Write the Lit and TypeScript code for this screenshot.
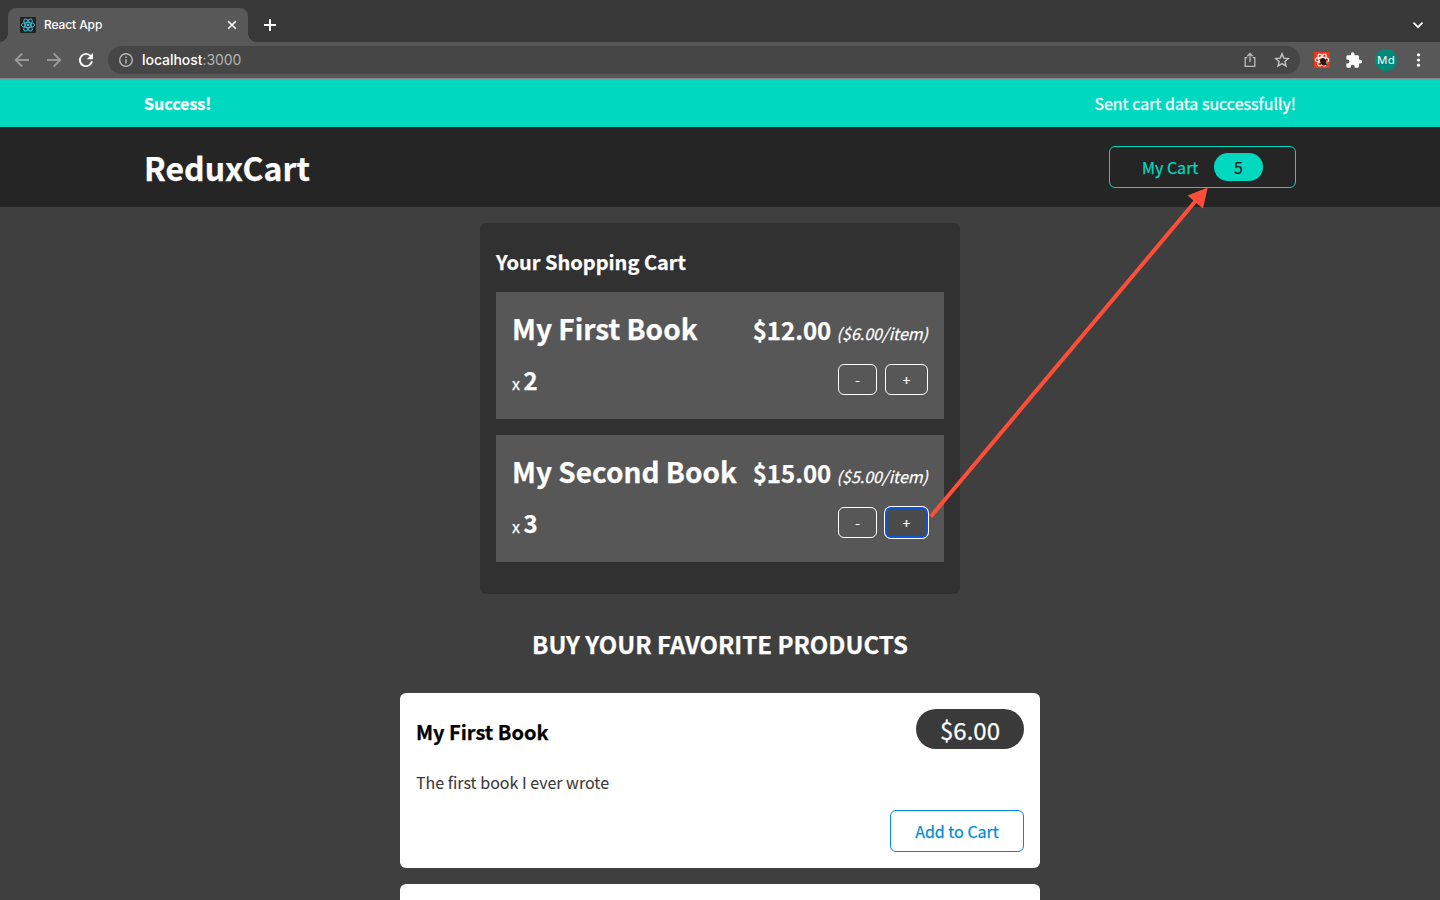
import { LitElement, html, css, svg } from "lit";
import { customElement, property } from "lit/decorators.js";

const reactMark = (stroke: string, w: number) => svg`
  <g fill="none" stroke=${stroke} stroke-width=${w}>
    <ellipse cx="8" cy="8" rx="6.7" ry="2.6"></ellipse>
    <ellipse cx="8" cy="8" rx="6.7" ry="2.6" transform="rotate(60 8 8)"></ellipse>
    <ellipse cx="8" cy="8" rx="6.7" ry="2.6" transform="rotate(120 8 8)"></ellipse>
  </g>
  <circle cx="8" cy="8" r="1.3" fill=${stroke}></circle>`;

@customElement("browser-chrome")
class BrowserChrome extends LitElement {
  static styles = css`
    :host { display: block; font-family: Inter, sans-serif; color: #fff; -webkit-text-stroke: 0; }
    svg { display: block; flex: none; }
    .strip { display: flex; height: 42px; box-sizing: border-box; padding: 8px 14px 0 8px; background: #383838; }
    .tab { position: relative; display: flex; align-items: center; box-sizing: border-box; width: 240px; height: 34px; padding: 0 10px 0 12px; background: #585858; border-radius: 8px 8px 0 0; }
    .tab::before, .tab::after { content: ""; position: absolute; bottom: 0; width: 8px; height: 8px; }
    .tab::before { left: -8px; background: radial-gradient(circle at 0 0, transparent 7.5px, #585858 8px); }
    .tab::after { right: -8px; background: radial-gradient(circle at 100% 0, transparent 7.5px, #585858 8px); }
    .name { flex: 1; margin-left: 8px; font-size: 12px; line-height: 16px; font-weight: 500; letter-spacing: -0.1px; }
    .plus { margin: 10px 0 0 15px; }
    .chev { margin: 10px 0 0 auto; }
    .bar { display: flex; align-items: center; height: 36px; padding: 0 14px; background: #585858; border-bottom: 1px solid #858585; }
    .nav { display: flex; gap: 16px; margin-right: 14px; }
    .omni { flex: 1; display: flex; align-items: center; height: 28px; border-radius: 14px; background: #464646; padding: 0 10px; }
    .url { flex: 1; margin-left: 8px; font-size: 14px; line-height: 20px; font-weight: 500; letter-spacing: -0.05px; }
    .port { color: #b4b4b4; font-weight: 400; }
    .star { margin-left: 16px; }
    .exts { display: flex; align-items: center; margin-left: 14px; }
    .puzzle { margin-left: 16px; }
    .me { width: 22px; height: 22px; margin-left: 13px; border-radius: 50%; background: #00897b; font-family: "Noto Sans", sans-serif; font-size: 11.5px; line-height: 22px; text-align: center; font-weight: 400; letter-spacing: 0.2px; }
    .dots { margin-left: 13px; }
  `;
  render() {
    return html`
      <div class="strip">
        <div class="tab">
          <svg width="16" height="16"><rect width="16" height="16" rx="1" fill="#222"></rect>${reactMark("#3fbfdf", 0.9)}</svg>
          <span class="name">React App</span>
          <svg width="12" height="12"><path d="M2.2 2.2l7.6 7.6M9.8 2.2l-7.6 7.6" stroke="#fff" stroke-width="1.6"></path></svg>
        </div>
        <svg class="plus" width="14" height="14"><path d="M7 1v12M1 7h12" stroke="#fff" stroke-width="2"></path></svg>
        <svg class="chev" width="16" height="14"><path d="M3.5 4.7L8 9.2l4.5-4.5" fill="none" stroke="#fff" stroke-width="1.7"></path></svg>
      </div>
      <div class="bar">
        <div class="nav">
          <svg width="16" height="16"><path d="M15 8H2M8.2 1.5L1.7 8l6.5 6.5" fill="none" stroke="#999" stroke-width="1.8"></path></svg>
          <svg width="16" height="16"><path d="M1 8h13M7.8 1.5L14.3 8l-6.5 6.5" fill="none" stroke="#999" stroke-width="1.8"></path></svg>
          <svg width="16" height="16"><path d="M12.8 4.2A6.1 6.1 0 1 0 14 9.3" fill="none" stroke="#fff" stroke-width="1.9"></path><path d="M15 1v6.2H8.8z" fill="#fff"></path></svg>
        </div>
        <div class="omni">
          <svg width="16" height="16"><circle cx="8" cy="8" r="6.3" fill="none" stroke="#b4b8bc" stroke-width="1.4"></circle><path d="M8 7.2v4.3M8 4.5v1.6" stroke="#b4b8bc" stroke-width="1.5"></path></svg>
          <span class="url">localhost<span class="port">:3000</span></span>
          <svg width="16" height="16"><path d="M5.3 5.6H3.2v8.7h9.6V5.6h-2.1M8 10V1.8M5.3 4.2L8 1.5l2.7 2.7" fill="none" stroke="#bdbdbd" stroke-width="1.3"></path></svg>
          <svg class="star" width="16" height="16"><path d="M8 1.9l1.8 4.2 4.6.4-3.5 3 1.1 4.5L8 11.6 4 14l1.1-4.5-3.5-3 4.6-.4z" fill="none" stroke="#c4c4c4" stroke-width="1.4"></path></svg>
        </div>
        <div class="exts">
          <svg width="16" height="16"><rect width="16" height="16" fill="#e8381b"></rect>${reactMark("#fff", 1.1)}<ellipse cx="9.3" cy="9.8" rx="3" ry="3.7" transform="rotate(-20 9.3 9.8)" fill="#2b1512"></ellipse><path d="M5.5 7.500l3 2M6 12l2-1M11 8.500l2-1.500M11 12l2 .8" stroke="#2b1512"></path></svg>
          <svg class="puzzle" width="16" height="16" viewBox="1.5 0.7 21.5 21.5"><path fill="#fff" d="M20.5 11H19V7c0-1.1-.9-2-2-2h-4V3.5a2.5 2.5 0 0 0-5 0V5H4c-1.1 0-2 .9-2 2v3.800h1.500a2.700 2.700 0 0 1 0 5.400H2V20c0 1.100.9 2 2 2h3.800v-1.500a2.700 2.700 0 0 1 5.400 0V22H17c1.100 0 2-.9 2-2v-4h1.500a2.500 2.500 0 0 0 0-5z"></path></svg>
          <span class="me">Md</span>
          <svg class="dots" width="16" height="16" fill="#fff"><circle cx="8.5" cy="2.8" r="1.6"></circle><circle cx="8.5" cy="8" r="1.6"></circle><circle cx="8.5" cy="13.2" r="1.6"></circle></svg>
        </div>
      </div>`;
  }
}

@customElement("cart-item")
class CartItem extends LitElement {
  @property() name = "";
  @property() total = "";
  @property() price = "";
  @property() quantity = "";
  @property({ type: Boolean }) focused = false;
  static styles = css`
    :host { display: block; box-sizing: border-box; height: 127px; padding: 16px; margin-bottom: 16px; background: #575757; color: #fff; }
    .row { display: flex; justify-content: space-between; align-items: baseline; height: 41px; line-height: 41px; }
    .name { font-size: 28px; font-weight: 700; white-space: nowrap; }
    .total { font-size: 24px; font-weight: 700; white-space: nowrap; }
    .each { font-size: 16px; font-weight: 400; font-style: italic; margin-left: 5.3px; }
    .foot { display: flex; justify-content: space-between; margin-top: 15px; height: 35px; }
    .qty { line-height: 31px; font-size: 16px; }
    .count { font-size: 24px; font-weight: 700; margin-left: 3.5px; }
    .acts { display: flex; gap: 8px; }
    .btn { box-sizing: border-box; height: 31px; width: 39px; border: 1px solid #fff; border-radius: 6px; text-align: center; font-size: 13.333px; line-height: 29px; }
    .wide { width: 43px; }
    .focus { background: #4b4b4b; border: 2px solid #0b57d8; box-shadow: 0 0 0 1px #fff; line-height: 27px; }
  `;
  render() {
    return html`
      <div class="row"><span class="name">${this.name}</span><span class="total">${this.total}<span class="each">(${this.price}/item)</span></span></div>
      <div class="foot">
        <div class="qty">x<span class="count">${this.quantity}</span></div>
        <div class="acts"><div class="btn">-</div><div class="btn wide ${this.focused ? "focus" : ""}">+</div></div>
      </div>`;
  }
}

@customElement("app-root")
class AppRoot extends LitElement {
  static styles = css`
    :host { display: block; position: relative; height: 900px; overflow: hidden; background: #3f3f3f; color: #fff; font-family: "Noto Sans CJK JP", sans-serif; font-size: 16px; -webkit-text-stroke: 0.25px; }
    .note { display: flex; justify-content: space-between; height: 48px; line-height: 49px; padding: 0 144px; background: #00d9c0; }
    .strong { font-weight: 700; }
    .head { display: flex; justify-content: space-between; align-items: center; height: 80px; padding: 0 144px; background: #252525; }
    .brand { font-size: 32px; font-weight: 700; line-height: 76px; height: 76px; }
    .mycart { display: flex; align-items: center; box-sizing: border-box; width: 187px; height: 42px; padding-left: 32px; border: 1px solid #00d9c0; border-radius: 6px; color: #00d9c0; }
    .label { width: 56px; line-height: 24px; white-space: nowrap; }
    .badge { width: 49px; height: 28px; margin-left: 16px; border-radius: 14px; background: #00d9c0; color: #252525; text-align: center; line-height: 29px; }
    .cart { box-sizing: border-box; width: 480px; height: 371px; margin: 16px auto 0; padding: 24px 16px 0; border-radius: 6px; background: #313131; }
    .ctitle { font-size: 20px; line-height: 30px; height: 45px; font-weight: 700; }
    .buy { margin-top: 32px; height: 67px; text-align: center; font-size: 24px; line-height: 36px; font-weight: 700; }
    .card { box-sizing: border-box; width: 640px; height: 175px; margin: 0 auto 16px; padding: 16px; border-radius: 6px; background: #fff; color: #3a3a3a; }
    .top { display: flex; justify-content: space-between; }
    .prod { color: #000; font-size: 20px; font-weight: 700; line-height: 46px; }
    .pill { width: 108px; height: 40px; border-radius: 20px; background: #3a3a3a; color: #fff; font-size: 24px; line-height: 42px; text-align: center; }
    .desc { margin-top: 15px; line-height: 24px; -webkit-text-stroke: 0.1px; }
    .act { display: flex; justify-content: flex-end; margin-top: 16px; }
    .add { box-sizing: border-box; width: 134px; height: 42px; border: 1px solid #008dd5; border-radius: 6px; color: #008dd5; text-align: center; line-height: 40px; }
    .arrow { position: absolute; left: 0; top: 0; }
  `;
  render() {
    return html`
      <browser-chrome></browser-chrome>
      <div class="note"><span class="strong">Success!</span><span class="sent">Sent cart data successfully!</span></div>
      <div class="head">
        <div class="brand">ReduxCart</div>
        <div class="mycart"><span class="label">My Cart</span><span class="badge">5</span></div>
      </div>
      <div class="cart">
        <div class="ctitle">Your Shopping Cart</div>
        <cart-item name="My First Book" total="$12.00" price="$6.00" quantity="2"></cart-item>
        <cart-item name="My Second Book" total="$15.00" price="$5.00" quantity="3" focused></cart-item>
      </div>
      <div class="buy">BUY YOUR FAVORITE PRODUCTS</div>
      <div class="card">
        <div class="top"><span class="prod">My First Book</span><span class="pill">$6.00</span></div>
        <div class="desc">The first book I ever wrote</div>
        <div class="act"><span class="add">Add to Cart</span></div>
      </div>
      <div class="card"></div>
      <svg class="arrow" width="1440" height="900"><path d="M930.8 516.5L1196 200.5" stroke="#ff4e38" stroke-width="4"></path><path d="M1207.7 187.5L1203 208.5L1187.5 195.5z" fill="#ff4e38"></path></svg>`;
  }
}
